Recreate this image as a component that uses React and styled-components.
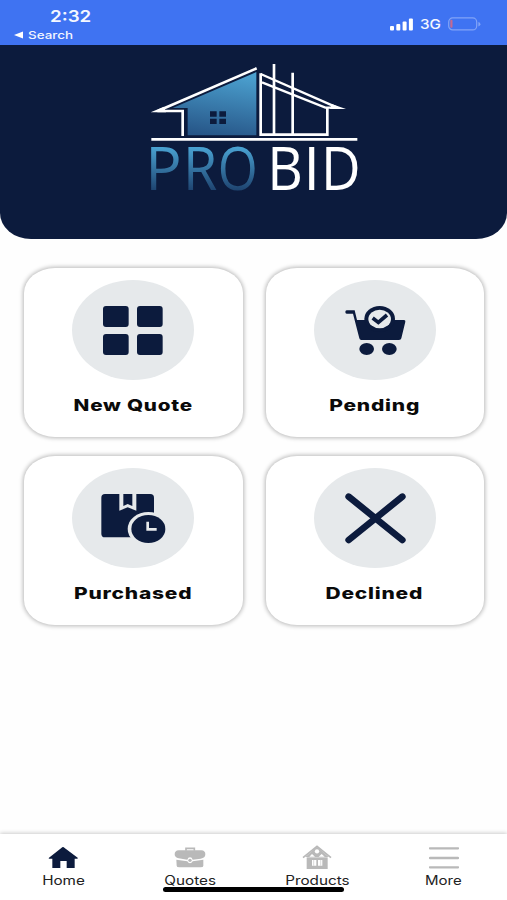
import styled, { createGlobalStyle } from 'styled-components';

const navy = '#0c1b3d';
const grey = '#b9b9b9';

const GlobalStyle = createGlobalStyle`
  * {
    box-sizing: border-box;
  }

  body {
    margin: 0;
    background: #fefefe;
    font-family: Inter, 'Liberation Sans', sans-serif;
  }
`;

const Screen = styled.div`
  display: flex;
  flex-direction: column;
  height: 900px;
  overflow: hidden;
`;

/* wide lettering used by every label of the app */
const Wide = styled.span`
  display: block;
  white-space: nowrap;
  transform: scaleX(${({ $scale }) => $scale || 1.2});
  transform-origin: ${({ $origin }) => $origin || 'center'};
`;

const StatusBar = styled.div`
  display: flex;
  justify-content: space-between;
  height: 45px;
  background: #3f73f2;
  color: #f4f7ff;
`;

const Clock = styled.div`
  padding: 6px 0 0 14px;
`;

const Time = styled(Wide)`
  margin-left: 36px;
  font-size: 16px;
  line-height: 20px;
  font-weight: 600;
`;

const BackLink = styled.div`
  display: flex;
  align-items: center;
  gap: 5px;
  height: 18px;
  font-size: 11px;
  line-height: 16px;
  font-weight: 500;
`;

const Signal = styled.div`
  display: flex;
  align-items: center;
  height: 20px;
  margin-top: 14px;
  padding-right: 26px;
`;

const Network = styled(Wide)`
  width: 28px;
  margin-left: 7px;
  font-size: 13.5px;
  font-weight: 500;
`;

const Header = styled.header`
  display: flex;
  justify-content: center;
  height: 194px;
  padding: 5px 0 0 2px;
  background: ${navy};
  border-radius: 0 0 31px 31px / 0 0 26px 26px;
`;

const Grid = styled.main`
  display: grid;
  grid-template-columns: 1fr 1fr;
  grid-auto-rows: 169px;
  gap: 19px 23px;
  flex: 1;
  padding: 29px 23px 0 24px;
`;

const Card = styled.button`
  display: flex;
  flex-direction: column;
  align-items: center;
  padding: 12px 0 0;
  border: 0;
  border-radius: 31px / 25px;
  background: #fff;
  color: #0a0a0a;
  box-shadow: 0 0 4px 1px rgba(0, 0, 0, 0.28);
  font-family: inherit;
`;

const Disc = styled.div`
  width: 122px;
  height: 100px;
  border-radius: 50%;
  background: #e6e9eb;
  color: ${navy};

  svg {
    display: block;
  }
`;

const CardTitle = styled(Wide)`
  margin-top: 14px;
  font-size: 16px;
  line-height: 22px;
  font-weight: 800;
  letter-spacing: 0.6px;
`;

const TabBar = styled.nav`
  position: relative;
  display: grid;
  grid-template-columns: repeat(4, 1fr);
  height: 66px;
  background: #fff;
  box-shadow: 0 -1px 4px rgba(0, 0, 0, 0.2);
`;

const Tab = styled.a`
  display: flex;
  flex-direction: column;
  align-items: center;
  padding-top: 10px;
  color: ${({ $active }) => ($active ? navy : grey)};
`;

const TabTitle = styled(Wide)`
  margin-top: 2px;
  color: #222;
  font-size: 12.5px;
  line-height: 18px;
`;

const HomeIndicator = styled.div`
  position: absolute;
  left: 163px;
  bottom: 8px;
  width: 181px;
  height: 5px;
  border-radius: 3px;
  background: #000;
`;

const Logo = () => (
  <svg width="230" height="180" viewBox="0 0 690 540">
    <defs>
      <linearGradient id="wall" x1="0.6" y1="0" x2="0.4" y2="1">
        <stop offset="0" stopColor="#4ba0cf" />
        <stop offset="1" stopColor="#275688" />
      </linearGradient>
      <linearGradient id="pro" gradientUnits="userSpaceOnUse" x1="0" y1="290" x2="0" y2="425">
        <stop offset="0" stopColor="#4aa3d3" />
        <stop offset="1" stopColor="#1d416d" />
      </linearGradient>
    </defs>
    <path d="M349 66V256H143V174H98Z" fill="url(#wall)" />
    <path d="M210 184h20v16h-20zM238 184h20v16h-20zM210 206h20v16h-20zM238 206h20v16h-20z" fill={navy} />
    <g fill="none" stroke="#fff" strokeWidth="8">
      <path d="M350 55L55 182" />
      <path d="M52 183H128V258" />
      <path d="M362 70V254H562V174" />
      <path d="M362 72L592 173H556L366 97" strokeWidth="7" />
      <path d="M402 42V254M458 68V254" />
      <path d="M34 268H652" />
    </g>
    <path d="M32 187L72 170L78 187ZM575 162L618 177H570Z" fill="#fff" />
    <g fontFamily="'Open Sans', sans-serif" fontSize="182">
      <text y="421" fontWeight="400" fill="url(#pro)">
        <tspan x="16">P</tspan>
        <tspan x="129" textLength="103" lengthAdjust="spacingAndGlyphs">R</tspan>
        <tspan x="233" textLength="120" lengthAdjust="spacingAndGlyphs">O</tspan>
      </text>
      <text y="421" fontWeight="500" fill="#fff">
        <tspan x="382" textLength="107" lengthAdjust="spacingAndGlyphs">B</tspan>
        <tspan x="490">I</tspan>
        <tspan x="543" textLength="119" lengthAdjust="spacingAndGlyphs">D</tspan>
      </text>
    </g>
  </svg>
);

const SquaresIcon = () => (
  <svg width="122" height="100" viewBox="36 30 366 300" fill="currentColor">
    <rect x="129" y="108" width="77" height="63" rx="9" />
    <rect x="231" y="108" width="77" height="63" rx="9" />
    <rect x="129" y="192" width="77" height="63" rx="9" />
    <rect x="231" y="192" width="77" height="63" rx="9" />
  </svg>
);

const CartIcon = () => (
  <svg width="122" height="100" viewBox="41 30 366 300" fill="currentColor">
    <path d="M139 121H163L170 150H311Q316 150 315 155L303 205Q302 210 296 210H183Q178 210 177 205L158 131H139Q135 131 135 126T139 121Z" />
    <ellipse cx="238" cy="147" rx="46" ry="39" />
    <ellipse cx="238" cy="147" rx="34" ry="28" fill="#e6e9eb" />
    <path d="M217 144L234 157L260 135" fill="none" stroke="currentColor" strokeWidth="11" />
    <ellipse cx="199" cy="237" rx="22" ry="18" />
    <ellipse cx="267" cy="237" rx="22" ry="18" />
  </svg>
);

const ParcelIcon = () => (
  <svg width="122" height="100" viewBox="36 23 366 300" fill="currentColor">
    <rect x="124" y="101" width="158" height="130" rx="11" />
    <path d="M178 98V151L203 141L229 151V98H217V137L203 131L190 137V98Z" fill="#e6e9eb" />
    <ellipse cx="265" cy="206" rx="62" ry="51" fill="#e6e9eb" />
    <ellipse cx="265" cy="206" rx="51" ry="42" />
    <path d="M263 184V207H290" fill="none" stroke="#e6e9eb" strokeWidth="8" />
  </svg>
);

const CrossIcon = () => (
  <svg width="122" height="100" viewBox="41 23 366 300">
    <path d="M145 109L306 239M306 109L145 239" stroke="currentColor" strokeWidth="20" strokeLinecap="round" />
  </svg>
);

const HomeIcon = () => (
  <svg width="30" height="26" viewBox="0 0 90 78" fill="currentColor">
    <path d="M45 9Q47 9 50 12L89 41Q91 44 87 44H80V72H56V51H37V72H13V44H4Q0 44 3 41L40 12Q43 9 45 9Z" />
  </svg>
);

const BriefcaseIcon = () => (
  <svg width="32" height="26" viewBox="0 0 96 78" fill="currentColor">
    <path d="M36 20V13H61V20" fill="none" stroke="currentColor" strokeWidth="5" />
    <path d="M14 19H82Q94 20 94 31Q94 42 80 44L56 47Q54 40 48 40T40 47L14 43Q2 40 2 31Q2 20 14 19Z" />
    <path d="M7 47L40 52Q43 58 48 58T56 52L88 47V65Q88 70 80 70H16Q8 70 8 65Z" />
    <circle cx="48" cy="49" r="5" />
  </svg>
);

const BarnIcon = () => (
  <svg width="30" height="26" viewBox="0 0 90 78" fill="currentColor">
    <path d="M3 41L45 7L87 41" fill="none" stroke="currentColor" strokeWidth="5" />
    <path d="M45 8L80 39H10Z" />
    <g fill="#fff">
      <circle cx="45" cy="22" r="6.5" />
      <path d="M22 38L30 30L39 38ZM50 38L59 30L68 38Z" />
    </g>
    <path d="M14 40H77V75H14Z" />
    <path d="M30 48H43V65H30ZM48 48H61V65H48Z" fill="#fff" />
    <path d="M35 48V65M56 48V65" stroke="currentColor" strokeWidth="1.5" />
  </svg>
);

const MenuIcon = () => (
  <svg width="30" height="26" viewBox="0 0 90 78">
    <path d="M3 13H87M3 42H87M3 70H87" stroke="currentColor" strokeWidth="7" strokeLinecap="round" />
  </svg>
);

const SignalIcon = () => (
  <svg width="23" height="13" viewBox="0 0 23 13" fill="#fff">
    <rect x="0" y="8" width="4" height="4.5" rx="1" />
    <rect x="6.3" y="6" width="4" height="6.5" rx="1" />
    <rect x="12.6" y="3.5" width="4" height="9" rx="1" />
    <rect x="18.9" y="0.5" width="4" height="12" rx="1" />
  </svg>
);

const BatteryIcon = () => (
  <svg width="33" height="14" viewBox="0 0 33 14">
    <rect x="0.7" y="0.9" width="28" height="12" rx="4" fill="none" stroke="#82a4f7" strokeWidth="1.2" />
    <rect x="2.3" y="2.8" width="2.2" height="8" rx="1" fill="#c46a91" />
    <path d="M30.4 5v4.4q2-.6 2-2.2t-2-2.2z" fill="#82a4f7" />
  </svg>
);

const cards = [
  { title: 'New Quote', icon: SquaresIcon, scale: 1.29 },
  { title: 'Pending', icon: CartIcon, scale: 1.31 },
  { title: 'Purchased', icon: ParcelIcon, scale: 1.31 },
  { title: 'Declined', icon: CrossIcon, scale: 1.31 },
];

const tabs = [
  { title: 'Home', icon: HomeIcon, scale: 1.22, active: true },
  { title: 'Quotes', icon: BriefcaseIcon, scale: 1.22 },
  { title: 'Products', icon: BarnIcon, scale: 1.22 },
  { title: 'More', icon: MenuIcon, scale: 1.2 },
];

const App = () => {
  return (
    <Screen>
      <GlobalStyle />
      <StatusBar>
        <Clock>
          <Time $origin="left" $scale={1.17}>2:32</Time>
          <BackLink>
            <svg width="9" height="8" viewBox="0 0 9 8">
              <path d="M0 4L9 0.5V7.5Z" fill="#fff" />
            </svg>
            <Wide $origin="left" $scale={1.22}>Search</Wide>
          </BackLink>
        </Clock>
        <Signal>
          <SignalIcon />
          <Network $origin="left" $scale={1.13}>3G</Network>
          <BatteryIcon />
        </Signal>
      </StatusBar>
      <Header>
        <Logo />
      </Header>
      <Grid>
        {cards.map(({ title, icon: Icon, scale }) => (
          <Card key={title} type="button">
            <Disc>
              <Icon />
            </Disc>
            <CardTitle $scale={scale}>{title}</CardTitle>
          </Card>
        ))}
      </Grid>
      <TabBar>
        {tabs.map(({ title, icon: Icon, scale, active }) => (
          <Tab key={title} $active={active}>
            <Icon />
            <TabTitle $scale={scale}>{title}</TabTitle>
          </Tab>
        ))}
        <HomeIndicator />
      </TabBar>
    </Screen>
  );
};

export default App;
